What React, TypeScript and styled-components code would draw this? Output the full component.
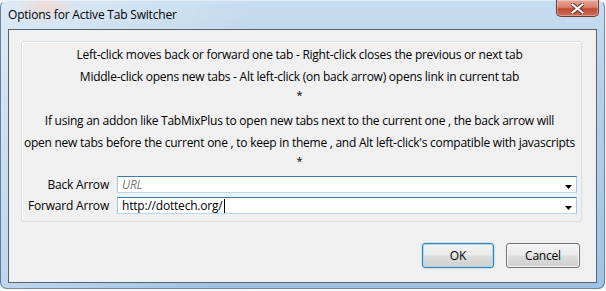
import React from "react";
import styled, { createGlobalStyle } from "styled-components";

const Global = createGlobalStyle`
  html, body { margin: 0; padding: 0; }
  body {
    width: 606px;
    height: 291px;
    overflow: hidden;
    background: #f4f4f4;
    font-family: "Open Sans", "Noto Sans", sans-serif;
  }
`;

const Screen = styled.div`
  width: 606px;
  height: 291px;
  display: flex;
  flex-direction: column;
  overflow: hidden;
`;

const Window = styled.div`
  box-sizing: border-box;
  width: 605px;
  height: 289px;
  flex: none;
  display: flex;
  flex-direction: column;
  padding: 0 7px 5px 7px;
  border: 1px solid rgba(40, 60, 90, 0.55);
  border-top-color: rgba(255, 255, 255, 0.7);
  border-radius: 7px;
  background:
    radial-gradient(ellipse 30px 20px at 45px 4px, rgba(255, 210, 190, 0.6), transparent),
    linear-gradient(100deg, rgba(255,255,255,0.4) 0%, rgba(255,255,255,0) 40%),
    linear-gradient(180deg, #c6dcef 0%, #b6d2ea 30%, #a8c9e7 70%, #9fc3e6 100%);
`;

const TitleBar = styled.div`
  height: 28px;
  flex: none;
  display: flex;
  align-items: flex-start;
`;

const Title = styled.div`
  font-size: 12px;
  line-height: 15px;
  color: #000;
  padding-top: 6px;
  letter-spacing: -0.2px;
`;

const CloseButton = styled.div`
  margin-left: auto;
  margin-right: -2px;
  margin-top: -1px;
  width: 43px;
  height: 17px;
  box-sizing: border-box;
  border: 1px solid #6d3a33;
  border-top: none;
  border-radius: 0 0 5px 5px;
  background: linear-gradient(180deg, #e9a797 0%, #d9806c 45%, #c24b33 55%, #cf6a52 100%);
  box-shadow: inset 0 0 0 1px rgba(255, 255, 255, 0.35);
  display: flex;
  align-items: center;
  justify-content: center;
`;

const Client = styled.div`
  flex: 1;
  box-sizing: border-box;
  border: 1px solid #58636e;
  background: #f0f0f0;
  display: flex;
  flex-direction: column;
  padding: 11px 14px 0 12px;
`;

const GroupBox = styled.div`
  box-sizing: border-box;
  border: 1px solid #d5dfe5;
  border-radius: 3px;
  box-shadow: inset 1px 1px 0 #fff;
  display: flex;
  flex-direction: column;
  padding: 2px 4px 7px 0;
`;

const Line = styled.div<{ $star?: boolean }>`
  font-size: ${(p) => (p.$star ? "11px" : "12px")};
  line-height: ${(p) => (p.$star ? "14px" : "22px")};
  height: 22px;
  text-align: center;
  color: #000;
  white-space: nowrap;
  letter-spacing: -0.25px;
`;

const Fields = styled.div`
  display: grid;
  grid-template-columns: 87px 1fr;
  column-gap: 8px;
  row-gap: 4px;
`;

const Label = styled.div`
  font-size: 12px;
  line-height: 17px;
  text-align: right;
  color: #000;
  white-space: nowrap;
  letter-spacing: -0.2px;
`;

const Combo = styled.div`
  box-sizing: border-box;
  height: 17px;
  border: 1px solid #a4c9e3;
  border-top-color: #3d7bad;
  border-bottom-color: #b7d9ed;
  background: #fff;
  display: flex;
  align-items: center;
  padding: 0 4px;
`;

const ComboText = styled.span<{ $placeholder?: boolean }>`
  flex: 1;
  font-size: 12px;
  line-height: 15px;
  letter-spacing: -0.2px;
  color: ${(p) => (p.$placeholder ? "#7a7a7a" : "#000")};
  font-style: ${(p) => (p.$placeholder ? "italic" : "normal")};
  white-space: nowrap;
`;

const Caret = styled.span`
  display: inline-block;
  width: 1px;
  height: 14px;
  background: #000;
  vertical-align: -3px;
  margin-left: 1px;
`;

const Arrow = styled.svg`
  flex: none;
  margin-top: 5px;
`;

const ButtonRow = styled.div`
  display: flex;
  justify-content: flex-end;
  gap: 12px;
  margin-top: 21px;
  padding-right: 2px;
`;

const Button = styled.div<{ $default?: boolean; $w: number }>`
  box-sizing: border-box;
  width: ${(p) => p.$w}px;
  height: 25px;
  border: 1px solid ${(p) => (p.$default ? "#3c7fb1" : "#707070")};
  border-radius: 3px;
  background: linear-gradient(180deg, #f2f2f2 0%, #ebebeb 48%, #dddddd 52%, #cfcfcf 100%);
  box-shadow: ${(p) =>
    p.$default
      ? "inset 0 0 0 1px #9fdcf9, 0 0 2px rgba(60,160,220,0.6)"
      : "inset 0 0 0 1px rgba(255,255,255,0.8)"};
  display: flex;
  align-items: center;
  justify-content: center;
  font-size: 12px;
  color: #000;
  letter-spacing: -0.2px;
`;

const Behind = styled.div`
  flex: 1;
  display: flex;
  overflow: hidden;
  background: #fafafa;
  padding-left: 55px;
`;

const BehindText = styled.div<{ $push?: boolean }>`
  font-size: 13px;
  line-height: 12px;
  color: #333;
  white-space: nowrap;
  margin-left: ${(p) => (p.$push ? "auto" : "0")};
  margin-right: ${(p) => (p.$push ? "4px" : "0")};
  font-weight: ${(p) => (p.$push ? "normal" : "bold")};
`;

const DropArrow = () => (
  <Arrow width="7" height="4" viewBox="0 0 7 4">
    <path d="M0 0H7L3.5 4Z" fill="#000" />
  </Arrow>
);

export default function App() {
  return (
    <Screen>
      <Global />
      <Window>
        <TitleBar>
          <Title>Options for Active Tab Switcher</Title>
          <CloseButton>
            <svg width="13" height="11" viewBox="0 0 13 11">
              <path
                d="M1.5 1.5L11.5 9.5M11.5 1.5L1.5 9.5"
                stroke="#5a2a22"
                strokeWidth="4"
                strokeLinecap="square"
              />
              <path
                d="M1.5 1.5L11.5 9.5M11.5 1.5L1.5 9.5"
                stroke="#fff"
                strokeWidth="2.2"
                strokeLinecap="square"
              />
            </svg>
          </CloseButton>
        </TitleBar>
        <Client>
          <GroupBox>
            <Line>Left-click moves back or forward one tab - Right-click closes the previous or next tab</Line>
            <Line>Middle-click opens new tabs - Alt left-click (on back arrow) opens link in current tab</Line>
            <Line $star>*</Line>
            <Line>If using an addon like TabMixPlus to open new tabs next to the current one , the back arrow will</Line>
            <Line>open new tabs before the current one , to keep in theme , and Alt left-click's compatible with javascripts</Line>
            <Line $star>*</Line>
            <Fields>
              <Label>Back Arrow</Label>
              <Combo>
                <ComboText $placeholder>URL</ComboText>
                <DropArrow />
              </Combo>
              <Label>Forward Arrow</Label>
              <Combo>
                <ComboText>
                  http://dottech.org/
                  <Caret />
                </ComboText>
                <DropArrow />
              </Combo>
            </Fields>
          </GroupBox>
          <ButtonRow>
            <Button $default $w={72}>OK</Button>
            <Button $w={74}>Cancel</Button>
          </ButtonRow>
        </Client>
      </Window>
      <Behind>
        <BehindText>Context Menu Image Saver 0.0.9</BehindText>
        <BehindText $push>Options</BehindText>
      </Behind>
    </Screen>
  );
}
